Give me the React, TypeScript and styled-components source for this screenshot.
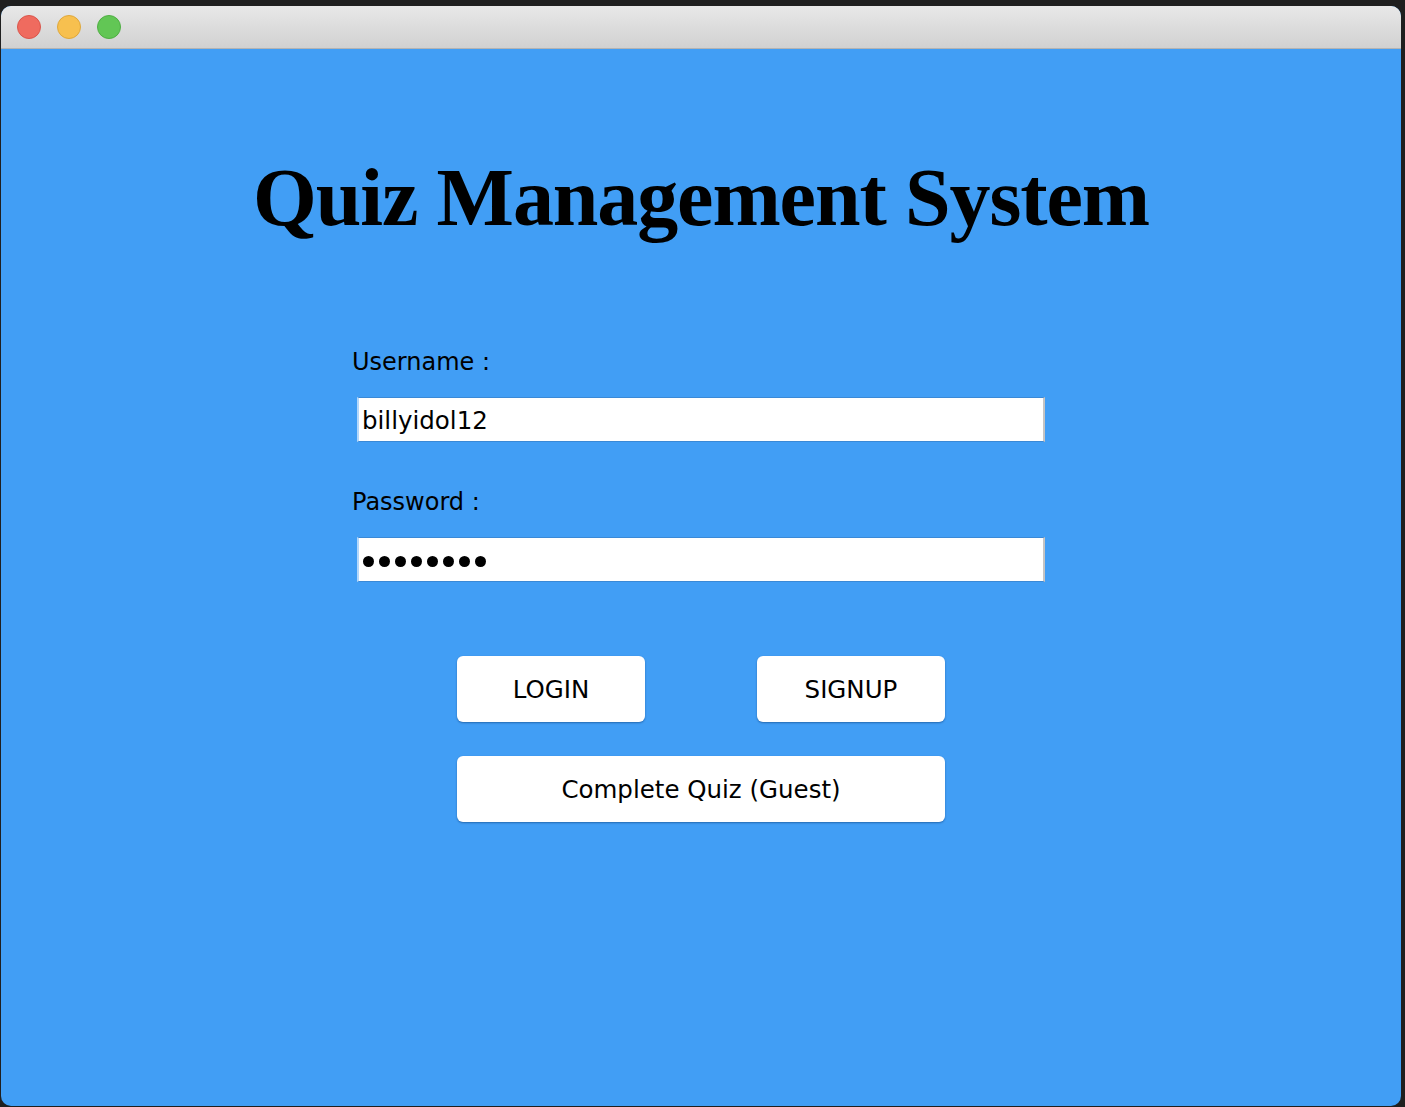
import React from "react";
import styled, { createGlobalStyle } from "styled-components";

const Global = createGlobalStyle`
  html, body { margin: 0; padding: 0; background: #1f1f1f; }
  body { width: 1405px; height: 1107px; overflow: hidden; }
  * { box-sizing: border-box; }
`;

const Desktop = styled.div`
  width: 1405px;
  height: 1107px;
  padding: 6px 4px 1px 1px;
  background: #1f1f1f;
`;

const Window = styled.div`
  width: 1400px;
  height: 1100px;
  border-radius: 10px;
  overflow: hidden;
  display: flex;
  flex-direction: column;
  background: #419ef5;
`;

const TitleBar = styled.div`
  height: 43px;
  flex: none;
  display: flex;
  align-items: center;
  gap: 16px;
  padding: 0 0 0 16px;
  background: linear-gradient(#e8e8e8, #d1d1d1);
  border-bottom: 1px solid #b3b3b3;
`;

const Light = styled.span<{ $c: string; $b: string }>`
  width: 24px;
  height: 24px;
  border-radius: 50%;
  background: ${(p) => p.$c};
  border: 1px solid ${(p) => p.$b};
`;

const Content = styled.div`
  flex: 1;
  display: flex;
  flex-direction: column;
  align-items: center;
  padding-top: 108px;
`;

const Title = styled.h1`
  margin: 0;
  font-family: "Liberation Serif", "Times New Roman", serif;
  font-weight: bold;
  font-size: 82px;
  line-height: 82px;
  letter-spacing: -1.1px;
  color: #000;
  white-space: nowrap;
`;

const Form = styled.div`
  width: 698px;
  margin-top: 107px;
  display: flex;
  flex-direction: column;
`;

const Label = styled.div<{ $top: number }>`
  margin-top: ${(p) => p.$top}px;
  height: 30px;
  line-height: 30px;
  padding-top: 1px;
  font-family: "DejaVu Sans", "Lucida Grande", sans-serif;
  font-size: 24px;
  color: #000;
`;

const Field = styled.div`
  margin: 21px 0 0 5px;
  width: 688px;
  height: 45px;
  background: #fff;
  border-top: 1px solid #3a89d6;
  border-bottom: 1px solid #3a89d6;
  border-left: 2px solid #b4d8fb;
  border-right: 2px solid #c4c4c4;
  display: flex;
  align-items: center;
  padding: 1px 0 0 3px;
  font-family: "DejaVu Sans", "Lucida Grande", sans-serif;
  font-size: 24.5px;
  color: #000;
`;

const Dots = styled.div`
  display: flex;
  gap: 5px;
  padding: 3px 0 0 1px;
`;

const Dot = styled.span`
  width: 11px;
  height: 11px;
  border-radius: 50%;
  background: #000;
`;

const ButtonRow = styled.div<{ $top: number }>`
  margin-top: ${(p) => p.$top}px;
  display: flex;
  gap: 112px;
`;

const Button = styled.button<{ $w: number }>`
  width: ${(p) => p.$w}px;
  height: 66px;
  background: #fff;
  border: none;
  border-radius: 6px;
  box-shadow: 0 1px 2px rgba(0, 40, 90, 0.45);
  font-family: "DejaVu Sans", "Lucida Grande", sans-serif;
  font-size: 24.5px;
  color: #000;
  padding: 0;
`;

export default function App() {
  return (
    <>
      <Global />
      <Desktop>
        <Window>
          <TitleBar>
            <Light $c="#ef6b5f" $b="#d9564c" />
            <Light $c="#f7c04f" $b="#dea73b" />
            <Light $c="#62c655" $b="#4fae43" />
          </TitleBar>
          <Content>
            <Title>Quiz Management System</Title>
            <Form>
              <Label $top={0}>Username :</Label>
              <Field>billyidol12</Field>
              <Label $top={44}>Password :</Label>
              <Field>
                <Dots>
                  {Array.from({ length: 8 }).map((_, i) => (
                    <Dot key={i} />
                  ))}
                </Dots>
              </Field>
            </Form>
            <ButtonRow $top={74}>
              <Button $w={188}>LOGIN</Button>
              <Button $w={188}>SIGNUP</Button>
            </ButtonRow>
            <ButtonRow $top={34}>
              <Button $w={488}>Complete Quiz (Guest)</Button>
            </ButtonRow>
          </Content>
        </Window>
      </Desktop>
    </>
  );
}
